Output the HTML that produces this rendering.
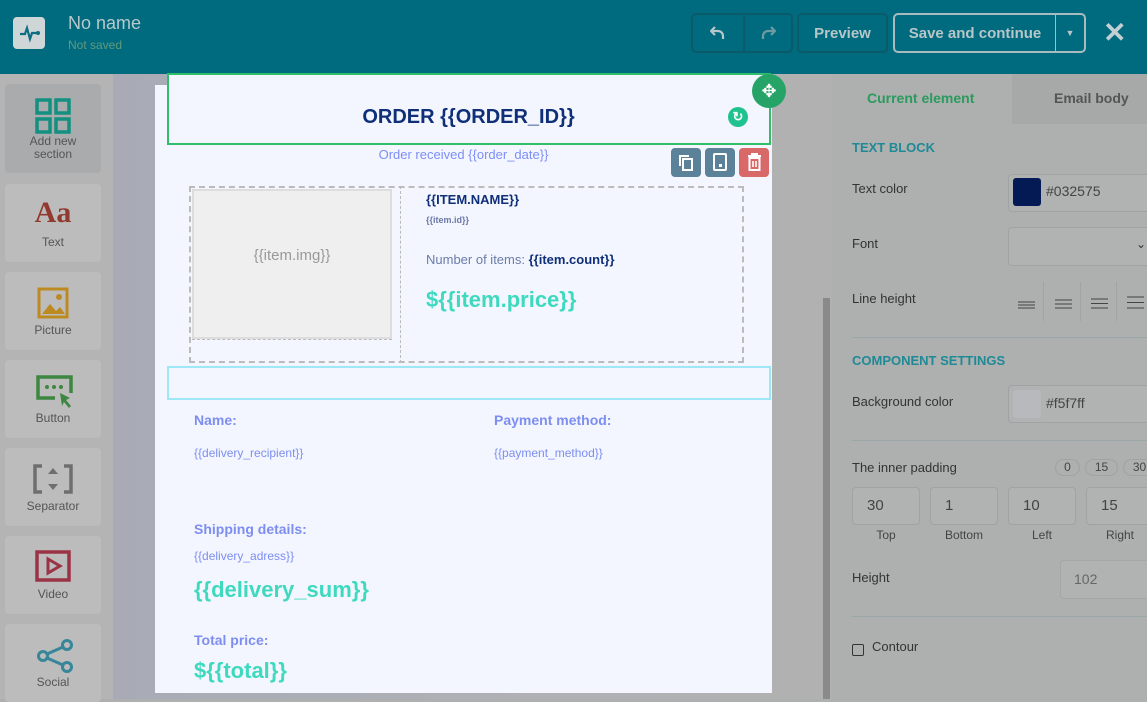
<!DOCTYPE html>
<html><head><meta charset="utf-8"><style>
*{box-sizing:border-box;margin:0;padding:0}
body{width:1147px;height:699px;overflow:hidden;position:relative;font-family:"Liberation Sans",sans-serif;background:#aeb0b0}
.abs{position:absolute}
.hdr{left:0;top:0;width:1147px;height:74px;background:#006b7e}
.btn{position:absolute;top:13px;height:40px;border:2px solid #0b5a6a;border-radius:5px;color:#b7c6c9;font-weight:bold;font-size:15px;display:flex;align-items:center;justify-content:center}
.side{left:0;top:74px;width:113px;height:625px;background:#b4b4b4}
.item{position:absolute;left:5px;width:96px;height:78px;background:#bcbcbc;border-radius:4px;text-align:center;font-size:12px;color:#555}
.item .lbl{position:absolute;left:0;right:0;bottom:13px}
.canvas{left:113px;top:74px;width:719px;height:625px;background:linear-gradient(90deg,#a8abb6,#b0b1b5 60%,#b1b1b1)}
.email{left:155px;top:85px;width:617px;height:608px;background:#f3f6ff}
.t{position:absolute;white-space:nowrap}
.rp{left:832px;top:74px;width:315px;height:625px;background:#adb0af}
.lab{position:absolute;left:20px;font-size:13px;color:#333}
.inp{position:absolute;border:1px solid #9ea3a3;border-radius:4px;background:#b0b3b2}
.sec{position:absolute;left:20px;font-size:13px;color:#1f8a96;font-weight:bold}
.hr{position:absolute;left:20px;right:0;height:1px;background:#9aa6a8}
.lh{position:absolute;top:208px;width:36px;height:39px;border-right:1px solid #a0a4a4}
</style></head><body>
<div class="abs hdr">
 <div class="abs" style="left:13px;top:17px;width:32px;height:32px;background:#cfd6d8;border-radius:4px">
  <svg width="32" height="32" viewBox="0 0 32 32"><path d="M7 17h5l2-6 3 11 2-6h5" stroke="#0c6e80" stroke-width="2.2" fill="none"/><circle cx="25" cy="16" r="2" fill="#0c6e80"/></svg>
 </div>
 <div class="t" style="left:68px;top:13px;font-size:18px;color:#b8c8cb">No name</div>
 <div class="t" style="left:68px;top:38px;font-size:12px;color:#5f9a7e">Not saved</div>
 <div class="btn" style="left:691px;width:52px;border-right:none;border-radius:5px 0 0 5px"><svg width="16" height="16" viewBox="0 0 16 16"><path d="M5 2L1 6l4 4M1 6h7a5 5 0 0 1 5 5v3" fill="none" stroke="#b7c6c9" stroke-width="2.2"/></svg></div>
 <div class="btn" style="left:743px;width:50px;border-radius:0 5px 5px 0"><svg width="16" height="16" viewBox="0 0 16 16"><path d="M11 2l4 4-4 4M15 6H8a5 5 0 0 0-5 5v3" fill="none" stroke="#6f9aa3" stroke-width="2.2"/></svg></div>
 <div class="btn" style="left:797px;width:91px">Preview</div>
 <div class="btn" style="left:893px;width:163px;border-color:#a8bcc0;border-right-width:1px;border-radius:5px 0 0 5px">Save and continue</div>
 <div class="btn" style="left:1056px;width:30px;border-color:#a8bcc0;border-left:none;border-radius:0 5px 5px 0;font-size:9px">▼</div>
 <div class="t" style="left:1103px;top:16px;font-size:28px;color:#c3cfd2;font-weight:bold">✕</div>
</div>
<div class="abs side">
 <div class="item" style="top:10px;height:89px;background:#a9abad">
  <svg class="abs" style="left:30px;top:14px" width="36" height="36" viewBox="0 0 36 36" fill="none" stroke="#13907f" stroke-width="3.5"><rect x="2" y="2" width="13" height="13"/><rect x="21" y="2" width="13" height="13"/><rect x="2" y="21" width="13" height="13"/><rect x="21" y="21" width="13" height="13"/></svg>
  <div class="lbl" style="bottom:12px;line-height:13px">Add new<br>section</div></div>
 <div class="item" style="top:110px"><div class="t" style="left:0;right:0;top:12px;font-size:30px;font-weight:bold;color:#913a2f;font-family:'Liberation Serif',serif">Aa</div><div class="lbl">Text</div></div>
 <div class="item" style="top:198px"><svg class="abs" style="left:32px;top:15px" width="32" height="32" viewBox="0 0 32 32"><rect x="2" y="2" width="28" height="28" fill="none" stroke="#bd8a22" stroke-width="3"/><path d="M5 27l8-10 6 7 4-4 5 7z" fill="#bd8a22"/><circle cx="22" cy="10" r="3" fill="#bd8a22"/></svg><div class="lbl">Picture</div></div>
 <div class="item" style="top:286px"><svg class="abs" style="left:30px;top:14px" width="40" height="40" viewBox="0 0 40 40"><path d="M20 24H3V3h33v16" fill="none" stroke="#3d8740" stroke-width="3.5"/><circle cx="12" cy="13" r="2" fill="#3d8740"/><circle cx="19" cy="13" r="2" fill="#3d8740"/><circle cx="26" cy="13" r="2" fill="#3d8740"/><path d="M25 19l10 5-4 2 5 6-2 2-5-6-2 4z" fill="#3d8740"/></svg><div class="lbl">Button</div></div>
 <div class="item" style="top:374px"><svg class="abs" style="left:28px;top:16px" width="40" height="30" viewBox="0 0 40 30"><path d="M9 2H2v26h7M31 2h7v26h-7" fill="none" stroke="#6e6e6e" stroke-width="3.5"/><path d="M20 4l5 6H15zM20 26l5-6H15z" fill="#6e6e6e"/></svg><div class="lbl">Separator</div></div>
 <div class="item" style="top:462px"><svg class="abs" style="left:30px;top:14px" width="36" height="32" viewBox="0 0 36 32"><rect x="2" y="2" width="32" height="28" fill="none" stroke="#9b3346" stroke-width="3.5"/><path d="M13 9l12 7-12 7z" fill="none" stroke="#9b3346" stroke-width="3"/></svg><div class="lbl">Video</div></div>
 <div class="item" style="top:550px"><svg class="abs" style="left:30px;top:14px" width="40" height="36" viewBox="0 0 40 36"><circle cx="32" cy="7" r="4.5" fill="none" stroke="#37869a" stroke-width="3"/><circle cx="32" cy="29" r="4.5" fill="none" stroke="#37869a" stroke-width="3"/><circle cx="8" cy="18" r="4.5" fill="none" stroke="#37869a" stroke-width="3"/><path d="M12 16l16-7M12 20l16 7" stroke="#37869a" stroke-width="3"/></svg><div class="lbl">Social</div></div>
</div>
<div class="abs canvas"><div class="abs" style="left:710px;top:224px;width:7px;height:401px;background:#8a8a8a"></div></div>
<div class="abs email">
 <div class="abs" style="left:12px;top:-12px;width:604px;height:72px;border:2px solid #2fbf6a;background:#f3f6ff"></div>
 <div class="t" style="left:0;width:627px;text-align:center;top:21px;font-size:20px;font-weight:bold;color:#0f2f78">ORDER {{ORDER_ID}}</div>
 <div class="abs" style="left:573px;top:22px;width:20px;height:20px;border-radius:50%;background:#20c38f;color:#fff;font-size:13px;text-align:center;line-height:20px;font-weight:bold">↻</div>
 <div class="abs" style="left:597px;top:-11px;width:34px;height:34px;border-radius:50%;background:#26a467;color:#fff;text-align:center;line-height:34px;font-size:18px">✥</div>
 <div class="t" style="left:0;width:617px;text-align:center;top:62px;font-size:13px;color:#7d8ef7">Order received {{order_date}}</div>
 <div class="abs" style="left:516px;top:63px;width:30px;height:29px;border-radius:4px;background:#5c8299"></div>
 <div class="abs" style="left:550px;top:63px;width:30px;height:29px;border-radius:4px;background:#5c8299"></div>
 <div class="abs" style="left:584px;top:63px;width:30px;height:29px;border-radius:4px;background:#d96868"></div>
 <svg class="abs" style="left:523px;top:69px" width="16" height="17" viewBox="0 0 16 17"><path d="M2 12V2h9" fill="none" stroke="#fff" stroke-width="2"/><rect x="5" y="5" width="9" height="11" fill="none" stroke="#fff" stroke-width="2"/></svg>
 <svg class="abs" style="left:558px;top:68px" width="14" height="18" viewBox="0 0 14 18"><rect x="1" y="1" width="12" height="16" rx="1" fill="none" stroke="#fff" stroke-width="2"/><rect x="6" y="11" width="3" height="3" fill="#fff"/></svg>
 <svg class="abs" style="left:592px;top:68px" width="15" height="18" viewBox="0 0 15 18"><path d="M1 3h13M5 3V1h5v2" fill="none" stroke="#fff" stroke-width="2"/><path d="M2.5 5h10v12h-10z" fill="none" stroke="#fff" stroke-width="2"/><path d="M6 8v6M9 8v6" stroke="#fff" stroke-width="1.6"/></svg>
 <div class="abs" style="left:34px;top:101px;width:555px;height:177px;border:2px dashed #bbb"></div>
 <div class="abs" style="left:245px;top:101px;width:1px;height:177px;border-left:1px dashed #bbb"></div>
 <div class="abs" style="left:37px;top:104px;width:200px;height:150px;background:#efefef;border:2px solid #ddd"></div>
 <div class="abs" style="left:37px;top:254px;width:200px;height:1px;border-top:1px dashed #bbb"></div>
 <div class="t" style="left:37px;width:200px;text-align:center;top:162px;font-size:15px;color:#999">{{item.img}}</div>
 <div class="t" style="left:271px;top:107px;font-size:13px;font-weight:bold;color:#0f2f78">{{ITEM.NAME}}</div>
 <div class="t" style="left:271px;top:130px;font-size:9px;color:#6b78a8;font-weight:bold">{{item.id}}</div>
 <div class="t" style="left:271px;top:167px;font-size:13px;color:#6b7ca8">Number of items: <b style="color:#0f2f78">{{item.count}}</b></div>
 <div class="t" style="left:271px;top:202px;font-size:22px;font-weight:bold;color:#3fd9bf">${{item.price}}</div>
 <div class="abs" style="left:12px;top:281px;width:604px;height:34px;border:2px solid #9ee7f7"></div>
 <div class="t" style="left:39px;top:327px;font-size:14px;font-weight:bold;color:#7d8ef0">Name:</div>
 <div class="t" style="left:339px;top:327px;font-size:14px;font-weight:bold;color:#7d8ef0">Payment method:</div>
 <div class="t" style="left:39px;top:361px;font-size:12px;color:#7d8ef0">{{delivery_recipient}}</div>
 <div class="t" style="left:339px;top:361px;font-size:12px;color:#7d8ef0">{{payment_method}}</div>
 <div class="t" style="left:39px;top:436px;font-size:14px;font-weight:bold;color:#7d8ef0">Shipping details:</div>
 <div class="t" style="left:39px;top:464px;font-size:12px;color:#7d8ef0">{{delivery_adress}}</div>
 <div class="t" style="left:39px;top:492px;font-size:22px;font-weight:bold;color:#3fd9bf">{{delivery_sum}}</div>
 <div class="t" style="left:39px;top:547px;font-size:14px;font-weight:bold;color:#7d8ef0">Total price:</div>
 <div class="t" style="left:39px;top:573px;font-size:22px;font-weight:bold;color:#3fd9bf">${{total}}</div>
</div>
<div class="abs rp">
 <div class="abs" style="left:180px;top:0;width:135px;height:50px;background:#a7a8a8"></div>
 <div class="t" style="left:35px;top:16px;font-size:14px;font-weight:bold;color:#2b9a5e">Current element</div>
 <div class="t" style="left:222px;top:16px;font-size:14px;font-weight:bold;color:#555">Email body</div>
 <div class="sec" style="top:66px">TEXT BLOCK</div>
 <div class="lab" style="top:107px">Text color</div>
 <div class="inp" style="left:176px;top:100px;width:150px;height:38px"></div>
 <div class="abs" style="left:181px;top:104px;width:28px;height:28px;background:#031a55;border-radius:3px"></div>
 <div class="t" style="left:214px;top:109px;font-size:14px;color:#444">#032575</div>
 <div class="lab" style="top:162px">Font</div>
 <div class="inp" style="left:176px;top:153px;width:150px;height:39px"></div>
 <div class="t" style="left:304px;top:163px;font-size:12px;color:#333">⌄</div>
 <div class="lab" style="top:217px">Line height</div>
 <div class="lh" style="left:176px"></div><div class="lh" style="left:213px"></div><div class="lh" style="left:249px"></div><div class="lh" style="left:285px;border:none"></div>
 <svg class="abs" style="left:186px;top:222px" width="140" height="14" viewBox="0 0 140 14" stroke="#444" stroke-width="1"><path d="M0 6h17M0 9h17M0 12h17"/><path d="M37 4h17M37 8h17M37 12h17"/><path d="M73 3h17M73 7.5h17M73 12h17"/><path d="M109 1h17M109 6.5h17M109 12h17"/></svg>
 <div class="hr" style="top:263px"></div>
 <div class="sec" style="top:279px">COMPONENT SETTINGS</div>
 <div class="lab" style="top:320px">Background color</div>
 <div class="inp" style="left:176px;top:311px;width:150px;height:38px"></div>
 <div class="abs" style="left:181px;top:316px;width:28px;height:28px;background:#b7b9bd;border-radius:3px"></div>
 <div class="t" style="left:214px;top:321px;font-size:14px;color:#444">#f5f7ff</div>
 <div class="hr" style="top:366px"></div>
 <div class="lab" style="top:386px">The inner padding</div>
 <div class="abs" style="left:223px;top:385px;width:25px;height:17px;border:1px solid #9ea3a3;border-radius:9px;font-size:12px;color:#444;text-align:center">0</div>
 <div class="abs" style="left:253px;top:385px;width:33px;height:17px;border:1px solid #9ea3a3;border-radius:9px;font-size:12px;color:#444;text-align:center">15</div>
 <div class="abs" style="left:291px;top:385px;width:33px;height:17px;border:1px solid #9ea3a3;border-radius:9px;font-size:12px;color:#444;text-align:center">30</div>
 <div class="inp" style="left:20px;top:413px;width:68px;height:38px"></div><div class="t" style="left:35px;top:423px;font-size:15px;color:#444">30</div><div class="t" style="left:20px;width:68px;text-align:center;top:454px;font-size:12px;color:#444">Top</div>
 <div class="inp" style="left:98px;top:413px;width:68px;height:38px"></div><div class="t" style="left:113px;top:423px;font-size:15px;color:#444">1</div><div class="t" style="left:98px;width:68px;text-align:center;top:454px;font-size:12px;color:#444">Bottom</div>
 <div class="inp" style="left:176px;top:413px;width:68px;height:38px"></div><div class="t" style="left:191px;top:423px;font-size:15px;color:#444">10</div><div class="t" style="left:176px;width:68px;text-align:center;top:454px;font-size:12px;color:#444">Left</div>
 <div class="inp" style="left:254px;top:413px;width:68px;height:38px"></div><div class="t" style="left:269px;top:423px;font-size:15px;color:#444">15</div><div class="t" style="left:254px;width:68px;text-align:center;top:454px;font-size:12px;color:#444">Right</div>
 <div class="lab" style="top:496px">Height</div>
 <div class="inp" style="left:228px;top:486px;width:100px;height:39px;border-color:#a2a7a7"></div><div class="t" style="left:242px;top:497px;font-size:14px;color:#666">102</div>
 <div class="hr" style="top:542px"></div>
 <div class="abs" style="left:20px;top:570px;width:12px;height:12px;border:1px solid #333;border-radius:2px"></div>
 <div class="lab" style="left:40px;top:565px">Contour</div>
</div>
</body></html>
